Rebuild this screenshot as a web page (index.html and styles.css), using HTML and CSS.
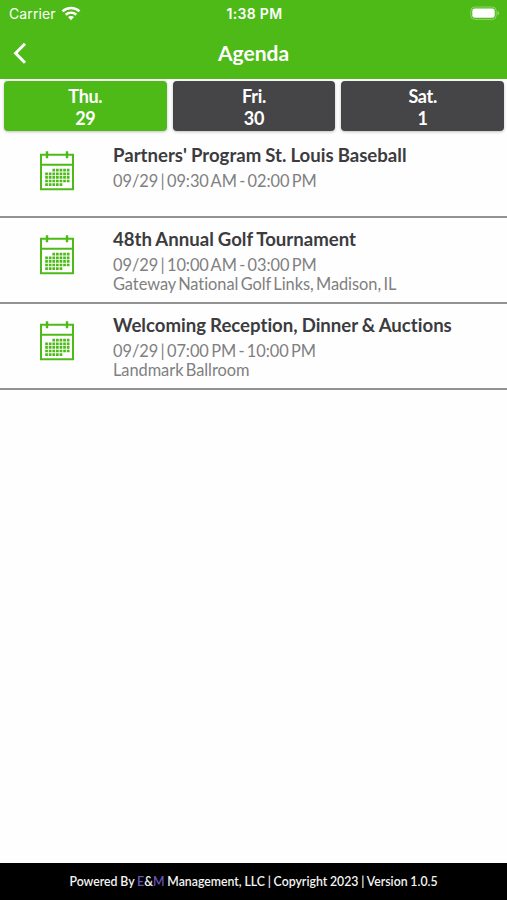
FILE: index.html
```html
<!DOCTYPE html>
<html lang="en">
<head>
<meta charset="UTF-8">
<meta name="viewport" content="width=device-width, initial-scale=1.0">
<title>Agenda</title>
<link rel="stylesheet" href="styles.css">
</head>
<body>

<!-- calendar icon, reused by every event -->
<svg width="0" height="0" class="defs">
  <symbol id="calendar" viewBox="0 0 36 42">
    <path d="M2 4.7H34V39.3H2ZM2 14.8H34" fill="none" stroke="#4dba18" stroke-width="2"/>
    <path d="M8 1.2V8.2M28 1.2V8.2" stroke="#4dba18" stroke-width="2.4"/>
    <g stroke="#4dba18" stroke-width="2.7" stroke-dasharray="2.7 .9">
      <path d="M13.4 20.2H30.5M6.2 23.8H30.5M6.2 27.4H30.5M6.2 31H30.5M6.2 34.6H23.3"/>
    </g>
  </symbol>
</svg>

<div class="app">
  <header class="header">
    <div class="status">
      <div class="carrier">
        <span>Carrier</span>
        <svg width="20" height="15" viewBox="0 0 20 15">
          <g fill="none" stroke="#fff" stroke-width="2.6">
            <path d="M1.5 5.4C6.4 .9 13.6 .9 18.5 5.4"/>
            <path d="M4.7 8.8C7.8 6 12.2 6 15.3 8.8"/>
          </g>
          <path d="M7 11.1C8.7 9.7 11.3 9.7 13 11.1L10 14.3Z" fill="#fff"/>
        </svg>
      </div>
      <div class="time">1:38 PM</div>
      <svg class="battery" width="30" height="15" viewBox="0 0 30 15">
        <rect x=".8" y="1" width="25.4" height="12.4" rx="3.8" fill="none" stroke="#8ed66b" stroke-width="1"/>
        <rect x="2.3" y="2.6" width="22.4" height="9.2" rx="2.4" fill="#fff"/>
        <path d="M27.5 5C29.7 5.7 29.7 8.7 27.5 9.4Z" fill="#8ed66b"/>
      </svg>
    </div>
    <div class="navbar">
      <svg class="back" width="14" height="22" viewBox="0 0 14 22">
        <path d="M12 1.8L2.6 11.3L12 20.8" fill="none" stroke="#fff" stroke-width="3"/>
      </svg>
      <h1 class="title">Agenda</h1>
    </div>
  </header>

  <nav class="days">
    <div class="day active"><span>Thu.</span><span>29</span></div>
    <div class="day"><span>Fri.</span><span>30</span></div>
    <div class="day"><span>Sat.</span><span>1</span></div>
  </nav>

  <main class="events">
    <div class="event">
      <svg class="icon"><use href="#calendar"/></svg>
      <div class="info">
        <h2 class="name">Partners' Program St. Louis Baseball</h2>
        <p>09/29 | 09:30 AM - 02:00 PM</p>
      </div>
    </div>
    <div class="event">
      <svg class="icon"><use href="#calendar"/></svg>
      <div class="info">
        <h2 class="name">48th Annual Golf Tournament</h2>
        <p>09/29 | 10:00 AM - 03:00 PM</p>
        <p>Gateway National Golf Links, Madison, IL</p>
      </div>
    </div>
    <div class="event">
      <svg class="icon"><use href="#calendar"/></svg>
      <div class="info">
        <h2 class="name">Welcoming Reception, Dinner &amp; Auctions</h2>
        <p>09/29 | 07:00 PM - 10:00 PM</p>
        <p>Landmark Ballroom</p>
      </div>
    </div>
  </main>

  <footer class="footer">
    <p>Powered By <span class="brand">E</span>&amp;<span class="brand">M</span> Management, LLC | Copyright 2023 | Version 1.0.5</p>
  </footer>
</div>

</body>
</html>
```

FILE: styles.css
```css
* {
  box-sizing: border-box;
}
body {
  margin: 0;
  background-color: #fefefe;
  font-family: Lato, "Liberation Sans", sans-serif;
  font-variant-ligatures: none;
}
h1, h2, p {
  margin: 0;
}
svg {
  display: block;
  flex-shrink: 0;
}
.defs {
  position: absolute;
}
.app {
  height: 900px;
  display: flex;
  flex-direction: column;
}
.header {
  height: 79px;
  background-color: #4dba18;
  color: #fff;
}
.status {
  height: 27px;
  padding: 0 7px 0 9px;
  display: grid;
  grid-template-columns: 1fr auto 1fr;
  align-items: center;
  font-family: Inter, sans-serif;
  font-size: 14px;
}
.carrier {
  display: flex;
  align-items: center;
  gap: 5px;
  letter-spacing: 0.1px;
}
.time {
  font-weight: 600;
  letter-spacing: 0.3px;
}
.battery {
  justify-self: end;
}
.navbar {
  height: 52px;
  padding: 0 13px;
  display: grid;
  grid-template-columns: 1fr auto 1fr;
  align-items: center;
}
.title {
  font-size: 21px;
  font-weight: 700;
  line-height: 26px;
}
.days {
  height: 55px;
  padding: 2px 3px 2px 4px;
  display: grid;
  grid-template-columns: repeat(3, 1fr);
  gap: 6px;
}
.day {
  height: 50px;
  padding-top: 5px;
  display: flex;
  flex-direction: column;
  align-items: center;
  border-radius: 4px;
  background-color: #454547;
  box-shadow: 0 1px 3px rgba(0,0,0,0.25);
  color: #fff;
  font-size: 18px;
  font-weight: 700;
  letter-spacing: -0.3px;
  line-height: 21.5px;
}
.day.active {
  background-color: #4dba18;
}
.events {
  flex: 1;
}
.event {
  height: 86px;
  padding-left: 39px;
  display: flex;
  border-bottom: 2px solid #929292;
}
.event:first-child {
  height: 84px;
}
.icon {
  width: 36px;
  height: 42px;
  margin: 16px 38px 0 0;
}
.info {
  padding-top: 10px;
  color: #808080;
  font-size: 16.4px;
  line-height: 19px;
  letter-spacing: -0.05px;
  word-spacing: -1.8px;
}
.name {
  margin-bottom: 4px;
  color: #3c3c3e;
  font-size: 18.6px;
  font-weight: 700;
  letter-spacing: 0;
  line-height: 23px;
  word-spacing: -0.5px;
}
.footer {
  height: 37px;
  background-color: #000;
  color: #f4f4f4;
  font-size: 12.3px;
  font-weight: 600;
  line-height: 38px;
  text-align: center;
  word-spacing: -0.3px;
}
.brand {
  color: #6455b8;
}
```
